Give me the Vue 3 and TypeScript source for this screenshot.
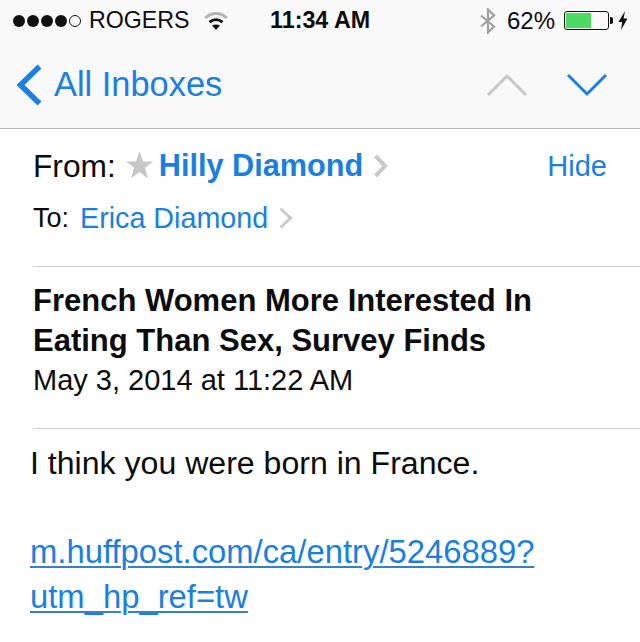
<script setup lang="ts">
const dots: boolean[] = [true, true, true, true, false]
</script>

<template>
  <div class="screen">
    <header class="bar">
      <div class="status">
        <div class="status-left">
          <span class="dots"><i v-for="(on, n) in dots" :key="n" class="dot" :class="{ off: !on }"></i></span>
          <span class="carrier">ROGERS</span>
          <svg class="wifi" width="24" height="20" viewBox="0 0 24 20">
            <path d="M1.2 7C7.5 1 16.5 1 22.8 7" fill="none" stroke="#b4b4b4" stroke-width="3"/>
            <path d="M5.5 11.2C9.5 7.8 14.5 7.8 18.5 11.2" fill="none" stroke="#111" stroke-width="3"/>
            <path d="M12 19L8 14.6C10.4 13 13.6 13 16 14.6Z" fill="#111"/>
          </svg>
        </div>
        <span class="time">11:34 AM</span>
        <div class="status-right">
          <svg class="bt" width="16" height="26" viewBox="0 0 16 26">
            <path d="M1 7.5L14 18.5L8 24.5V1.5L14 7.5L1 18.5" fill="none" stroke="#a0a0a0" stroke-width="2.2"/>
          </svg>
          <span class="pct">62%</span>
          <span class="battery"><span class="level"></span></span>
          <span class="nub"></span>
          <svg class="bolt" width="10" height="19" viewBox="0 0 10 19">
            <path d="M7 0L0.5 11H4.2L3 19L9.5 7.5H5.6Z" fill="#111"/>
          </svg>
        </div>
      </div>
      <nav class="nav">
        <div class="back">
          <svg width="26" height="42" viewBox="0 0 26 42">
            <path d="M23.5 2.5L4.5 21L23.5 39.5" fill="none" stroke="#1a7fe0" stroke-width="5.5"/>
          </svg>
          <span>All Inboxes</span>
        </div>
        <div class="arrows">
          <svg width="42" height="24" viewBox="0 0 42 24">
            <path d="M2 22L21 3L40 22" fill="none" stroke="#c6c6c6" stroke-width="3"/>
          </svg>
          <svg width="42" height="24" viewBox="0 0 42 24">
            <path d="M2 2L21 21L40 2" fill="none" stroke="#1a7fe0" stroke-width="3"/>
          </svg>
        </div>
      </nav>
    </header>

    <main class="mail">
      <section class="people">
        <div class="from">
          <span class="label">From:</span>
          <svg class="star" width="27" height="28" viewBox="0 0 27 28">
            <path d="M13.5 0L17 10.6H27L19 16.8L22 27.5L13.5 21L5 27.5L8 16.8L0 10.6H10Z" fill="#c8c8c8"/>
          </svg>
          <span class="sender">Hilly Diamond</span>
          <svg class="chev" width="15" height="24" viewBox="0 0 15 24">
            <path d="M2.5 2L12 12L2.5 22" fill="none" stroke="#c8c8c8" stroke-width="4"/>
          </svg>
          <span class="hide">Hide</span>
        </div>
        <div class="to">
          <span class="label-to">To:</span>
          <span class="recipient">Erica Diamond</span>
          <svg class="chev small" width="15" height="22" viewBox="0 0 15 22">
            <path d="M2.5 1.5L12.5 11L2.5 20.5" fill="none" stroke="#c8c8c8" stroke-width="3"/>
          </svg>
        </div>
      </section>
      <section class="subject">
        <h1>French Women More Interested In<br>Eating Than Sex, Survey Finds</h1>
        <p>May 3, 2014 at 11:22 AM</p>
      </section>
      <section class="body">
        <p class="line">I think you were born in France.</p>
        <a class="link">m.huffpost.com/ca/entry/5246889?<br>utm_hp_ref=tw</a>
      </section>
    </main>
  </div>
</template>

<style scoped>
.screen {
  width: 640px;
  height: 642px;
  overflow: hidden;
  background: #fff;
  color: #0c0c0c;
  font-family: "Liberation Sans", Arial, sans-serif;
}
.bar {
  height: 129px;
  box-sizing: border-box;
  background: #f9f9fa;
  border-bottom: 1px solid #b8b8b8;
}
.status {
  height: 41px;
  padding: 0 12px 0 13px;
  display: flex;
  align-items: center;
  justify-content: space-between;
  position: relative;
}
.status-left, .status-right { display: flex; align-items: center; }
.dots { display: flex; gap: 2px; }
.dot { width: 12px; height: 12px; border-radius: 50%; background: #111; box-sizing: border-box; }
.dot.off { background: none; border: 1px solid #111; }
.carrier { font-size: 23.2px; margin-left: 8px; }
.wifi { margin-left: 14px; }
.time { position: absolute; left: 270px; font-size: 23.3px; font-weight: 700; }
.bt { margin-right: 11px; }
.pct { font-size: 24px; margin-right: 9px; }
.battery {
  width: 45px; height: 19px; box-sizing: border-box;
  border: 1px solid #111; border-radius: 3px; padding: 1px; display: block;
}
.level { display: block; width: 25px; height: 100%; background: #4cd964; }
.nub { width: 3px; height: 7px; background: #111; margin-left: 1px; border-radius: 0 2px 2px 0; }
.bolt { margin-left: 5px; }
.nav {
  height: 87px;
  padding: 0 32px 0 16px;
  display: flex;
  align-items: center;
  justify-content: space-between;
}
.back { display: flex; align-items: center; gap: 12px; color: #1a7fe0; font-size: 34.4px; }
.arrows { display: flex; gap: 38px; }
.mail { padding-left: 33px; }
.people {
  height: 138px;
  box-sizing: border-box;
  border-bottom: 1px solid #d0d0d0;
  padding-top: 19px;
}
.from { display: flex; align-items: center; height: 36px; padding-right: 33px; font-size: 31.7px; }
.star { margin: 0 6px 2px 10px; }
.sender { color: #1a7fe0; font-weight: 700; font-size: 30.7px; }
.chev { margin-left: 10px; }
.hide { margin-left: auto; color: #1a7fe0; font-size: 29px; }
.to { display: flex; align-items: center; height: 36px; margin-top: 16px; font-size: 27px; }
.recipient { color: #1a7fe0; margin-left: 11px; font-size: 28.7px; }
.subject {
  height: 162px;
  box-sizing: border-box;
  border-bottom: 1px solid #d0d0d0;
  padding-top: 14px;
}
h1 { margin: 0; font-size: 31px; line-height: 40px; font-weight: 700; color: #0c0c0c; }
.subject p { margin: -1px 0 0; font-size: 29px; line-height: 40px; }
.body { margin-left: -3px; padding-top: 14px; font-size: 32.1px; line-height: 40px; }
.line { margin: 0 0 46px; }
.link {
  color: #1a7fe0;
  text-decoration: underline;
  text-decoration-color: #3a7fbe;
  text-decoration-thickness: 1.5px;
  text-underline-offset: 3px;
  font-size: 32.8px;
  line-height: 45px;
  display: block;
}
</style>
